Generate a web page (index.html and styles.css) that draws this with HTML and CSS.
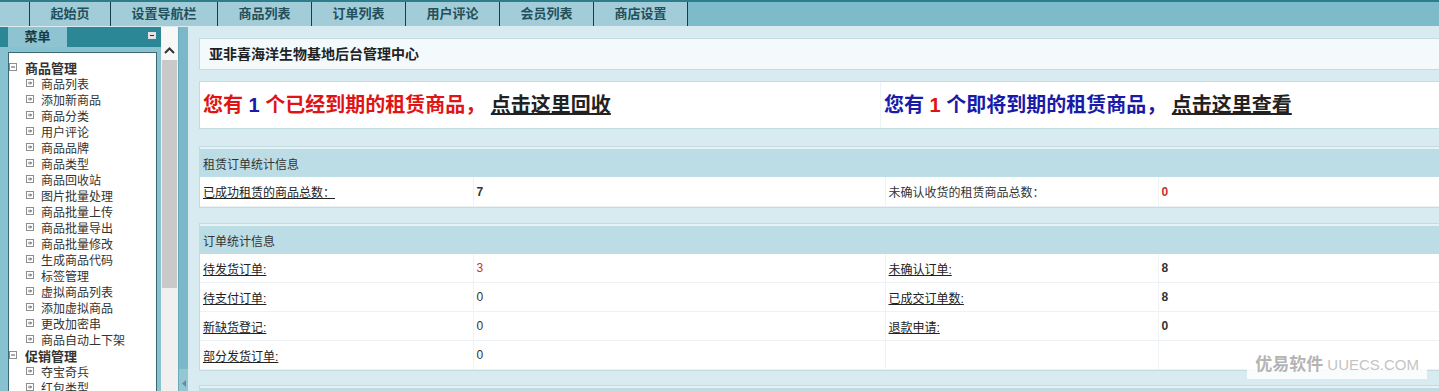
FILE: index.html
```html
<!DOCTYPE html>
<html lang="zh-CN">
<head>
    <meta charset="UTF-8">
    <meta name="viewport" content="width=device-width, initial-scale=1.0">
    <title>亚非喜海洋生物基地后台管理中心</title>
    <link rel="stylesheet" href="styles.css">
</head>
<body>
    <svg class="defs" width="0" height="0">
        <symbol id="ico-item" viewBox="0 0 8 8">
            <rect x="0.5" y="0.5" width="7" height="7" fill="#fff" stroke="#8e8e8e"/>
            <path d="M2 4h3.5M4 2.5 5.5 4 4 5.5" fill="none" stroke="#666"/>
        </symbol>
        <symbol id="ico-group" viewBox="0 0 8 8">
            <rect x="0.5" y="0.5" width="7" height="7" fill="#fff" stroke="#8e8e8e"/>
            <path d="M2 4h4" stroke="#555"/>
        </symbol>
    </svg>

    <div class="topnav">
        <span class="tab lead"></span>
        <a class="tab" href="#">起始页</a>
        <a class="tab" href="#">设置导航栏</a>
        <a class="tab" href="#">商品列表</a>
        <a class="tab" href="#">订单列表</a>
        <a class="tab" href="#">用户评论</a>
        <a class="tab" href="#">会员列表</a>
        <a class="tab" href="#">商店设置</a>
    </div>

    <div class="layout">
        <aside class="sidebar">
            <div class="menu-panel">
                <div class="menu-head">
                    <span class="menu-tab">菜单</span>
                    <span class="menu-toggle"></span>
                </div>
                <div class="menu-box">
                    <ul class="menu">
                        <li class="group"><svg class="ico"><use href="#ico-group"/></svg>商品管理</li>
                        <li class="item"><svg class="ico"><use href="#ico-item"/></svg><a href="#">商品列表</a></li>
                        <li class="item"><svg class="ico"><use href="#ico-item"/></svg><a href="#">添加新商品</a></li>
                        <li class="item"><svg class="ico"><use href="#ico-item"/></svg><a href="#">商品分类</a></li>
                        <li class="item"><svg class="ico"><use href="#ico-item"/></svg><a href="#">用户评论</a></li>
                        <li class="item"><svg class="ico"><use href="#ico-item"/></svg><a href="#">商品品牌</a></li>
                        <li class="item"><svg class="ico"><use href="#ico-item"/></svg><a href="#">商品类型</a></li>
                        <li class="item"><svg class="ico"><use href="#ico-item"/></svg><a href="#">商品回收站</a></li>
                        <li class="item"><svg class="ico"><use href="#ico-item"/></svg><a href="#">图片批量处理</a></li>
                        <li class="item"><svg class="ico"><use href="#ico-item"/></svg><a href="#">商品批量上传</a></li>
                        <li class="item"><svg class="ico"><use href="#ico-item"/></svg><a href="#">商品批量导出</a></li>
                        <li class="item"><svg class="ico"><use href="#ico-item"/></svg><a href="#">商品批量修改</a></li>
                        <li class="item"><svg class="ico"><use href="#ico-item"/></svg><a href="#">生成商品代码</a></li>
                        <li class="item"><svg class="ico"><use href="#ico-item"/></svg><a href="#">标签管理</a></li>
                        <li class="item"><svg class="ico"><use href="#ico-item"/></svg><a href="#">虚拟商品列表</a></li>
                        <li class="item"><svg class="ico"><use href="#ico-item"/></svg><a href="#">添加虚拟商品</a></li>
                        <li class="item"><svg class="ico"><use href="#ico-item"/></svg><a href="#">更改加密串</a></li>
                        <li class="item"><svg class="ico"><use href="#ico-item"/></svg><a href="#">商品自动上下架</a></li>
                        <li class="group"><svg class="ico"><use href="#ico-group"/></svg>促销管理</li>
                        <li class="item"><svg class="ico"><use href="#ico-item"/></svg><a href="#">夺宝奇兵</a></li>
                        <li class="item"><svg class="ico"><use href="#ico-item"/></svg><a href="#">红包类型</a></li>
                    </ul>
                </div>
            </div>
            <div class="scrollbar">
                <div class="sb-up">
                    <svg width="11" height="7" viewBox="0 0 11 7"><path d="M1 6 5.5 1.5 10 6" fill="none" stroke="#333" stroke-width="2"/></svg>
                </div>
                <div class="sb-thumb"></div>
            </div>
            <div class="splitter">
                <div class="split-btn">
                    <svg width="4" height="7" viewBox="0 0 4 7"><path d="M4 0v7L0 3.5z" fill="#6b8a92"/></svg>
                </div>
            </div>
        </aside>

        <main class="main">
            <div class="title-box">亚非喜海洋生物基地后台管理中心</div>

            <div class="alert-box">
                <div class="alert expired">您有 <span class="num">1</span> 个已经到期的租赁商品， <a href="#">点击这里回收</a></div>
                <div class="alert soon">您有 <span class="num">1</span> 个即将到期的租赁商品， <a href="#">点击这里查看</a></div>
            </div>

            <div class="panel rent">
                <table class="stats">
                    <colgroup><col class="c-label"><col class="c-value"><col class="c-label"><col></colgroup>
                    <tr><th colspan="4">租赁订单统计信息</th></tr>
                    <tr>
                        <td><a href="#">已成功租赁的商品总数：</a></td>
                        <td class="v">7</td>
                        <td>未确认收货的租赁商品总数：</td>
                        <td class="v red">0</td>
                    </tr>
                </table>
            </div>

            <div class="panel order">
                <table class="stats">
                    <colgroup><col class="c-label"><col class="c-value"><col class="c-label"><col></colgroup>
                    <tr><th colspan="4">订单统计信息</th></tr>
                    <tr>
                        <td><a href="#">待发货订单:</a></td>
                        <td class="red">3</td>
                        <td><a href="#">未确认订单:</a></td>
                        <td class="v">8</td>
                    </tr>
                    <tr>
                        <td><a href="#">待支付订单:</a></td>
                        <td>0</td>
                        <td><a href="#">已成交订单数:</a></td>
                        <td class="v">8</td>
                    </tr>
                    <tr>
                        <td><a href="#">新缺货登记:</a></td>
                        <td>0</td>
                        <td><a href="#">退款申请:</a></td>
                        <td class="v">0</td>
                    </tr>
                    <tr>
                        <td><a href="#">部分发货订单:</a></td>
                        <td>0</td>
                        <td></td>
                        <td></td>
                    </tr>
                </table>
            </div>

            <div class="panel more">
                <table class="stats">
                    <tr><th></th></tr>
                </table>
            </div>

            <div class="watermark"><b>优易软件</b> UUECS.COM</div>
        </main>
    </div>
</body>
</html>
```

FILE: styles.css
```css
body {
    margin: 0;
    height: 391px;
    overflow: hidden;
    font-family: "Liberation Sans", "Noto Sans CJK SC", sans-serif;
    font-size: 12px;
    color: #333;
    background: #d8ebf0;
}
a { color: #222; }
.defs { position: absolute; }

/* top navigation */
.topnav {
    display: flex;
    height: 24px;
    border-top: 2px solid #2c7e8d;
    background: #7ebbca;
}
.tab {
    padding: 0 20.5px;
    line-height: 24px;
    font-size: 13px;
    font-weight: bold;
    color: #23505b;
    background: #a2ccd7;
    border-left: 1px solid #11404a;
    text-decoration: none;
}
.tab:last-child { border-right: 1px solid #11404a; }
.tab.lead {
    width: 29px;
    padding: 0;
    border: 0;
}

.layout {
    display: flex;
    height: 365px;
}

/* left menu */
.sidebar {
    display: flex;
    flex: none;
    margin-top: 1px;
}
.menu-panel {
    width: 161px;
    display: flex;
    flex-direction: column;
    background: #88c1cf;
}
.menu-head {
    display: flex;
    align-items: center;
    height: 20px;
    padding-left: 8px;
    background: #2b8796;
}
.menu-tab {
    width: 59px;
    line-height: 20px;
    text-align: center;
    font-size: 13px;
    font-weight: bold;
    color: #183a41;
    background: #8ec4d1;
}
.menu-toggle {
    position: relative;
    width: 8px;
    height: 7px;
    margin: 0 5px 4px auto;
    background: #e2e2e2;
}
.menu-toggle::after {
    content: "";
    position: absolute;
    left: 2px;
    right: 2px;
    top: 3px;
    height: 1px;
    background: #333;
}
.menu-box {
    flex: 1;
    margin: 5px 4px 0 8px;
    padding-top: 6px;
    overflow: hidden;
    background: #fff;
    border: 1px solid #3b6a74;
    border-bottom: 0;
}
.menu {
    margin: 0;
    padding: 0;
    list-style: none;
}
.menu li {
    display: flex;
    align-items: center;
    height: 16px;
    white-space: nowrap;
}
.menu .ico {
    width: 8px;
    height: 8px;
    flex: none;
}
.menu .group {
    font-size: 13px;
    font-weight: bold;
    color: #333;
}
.menu .group .ico { margin-right: 8px; }
.menu .item { padding-left: 17px; }
.menu .item .ico { margin-right: 7px; }
.menu .item a {
    color: #333;
    text-decoration: none;
}

.scrollbar {
    width: 17px;
    display: flex;
    flex-direction: column;
    background: #f0f0f0;
}
.sb-up {
    height: 33px;
    box-sizing: border-box;
    padding-top: 16px;
    text-align: center;
    background: #f7f7f7;
}
.sb-thumb {
    height: 228px;
    margin: 0 1px;
    background: #c9c9c9;
}
.splitter {
    width: 9px;
    display: flex;
    flex-direction: column;
    justify-content: flex-end;
    background: #7bb9c8;
    border-left: 1px solid #6aabbb;
}
.split-btn {
    height: 22px;
    padding: 7px 0 0 3px;
    box-sizing: border-box;
    background: #93c7d4;
}

/* main content */
.main {
    position: relative;
    flex: 1;
    min-width: 0;
    overflow: hidden;
    padding: 12px 0 0 11px;
}
.title-box {
    width: 1372px;
    box-sizing: border-box;
    height: 32px;
    line-height: 30px;
    padding-left: 9px;
    font-size: 14px;
    font-weight: bold;
    color: #222;
    background: #f4fafc;
    border: 1px solid #c3dce4;
}
.alert-box {
    display: grid;
    grid-template-columns: 680px 1fr;
    width: 1372px;
    box-sizing: border-box;
    height: 48px;
    margin-top: 11px;
    background: #fff;
    border: 1px solid #c3dce4;
}
.alert {
    padding-left: 3px;
    line-height: 46px;
    font-size: 20px;
    font-weight: bold;
    white-space: nowrap;
}
.alert + .alert { border-left: 1px solid #eef4f6; }
.alert a { color: #222; }
.expired { color: #e01414; }
.expired .num { color: #1a1aa8; }
.soon { color: #1a1aa8; }
.soon .num { color: #e01414; }

.panel {
    width: 1372px;
    box-sizing: border-box;
    padding-top: 2px;
    background: #e7f2f5;
    border: 1px solid #c3dce4;
}
.rent { margin-top: 17px; }
.order { margin-top: 15px; }
.more { margin-top: 14px; }
.stats {
    width: 100%;
    border-collapse: collapse;
    table-layout: fixed;
}
.stats .c-label { width: 273px; }
.stats .c-value { width: 412px; }
.stats th {
    height: 28px;
    padding: 0 3px;
    text-align: left;
    font-weight: normal;
    color: #333;
    background: #bcdde6;
}
.stats td {
    height: 28px;
    padding: 0 3px;
    background: #fff;
    border-bottom: 1px solid #edf2f4;
    border-left: 1px solid #edf2f4;
    white-space: nowrap;
}
.stats td:first-child { border-left: 0; }
.rent td { height: 29px; }
.stats .v { font-weight: bold; }
.stats .red { color: #c8302a; }

.watermark {
    position: absolute;
    right: 12px;
    bottom: 12px;
    padding: 4px 8px;
    font-size: 15px;
    color: #c4c4c4;
    background: rgba(255, 255, 255, 0.85);
}
.watermark b {
    font-size: 17px;
    color: #b4b4b4;
}
```
